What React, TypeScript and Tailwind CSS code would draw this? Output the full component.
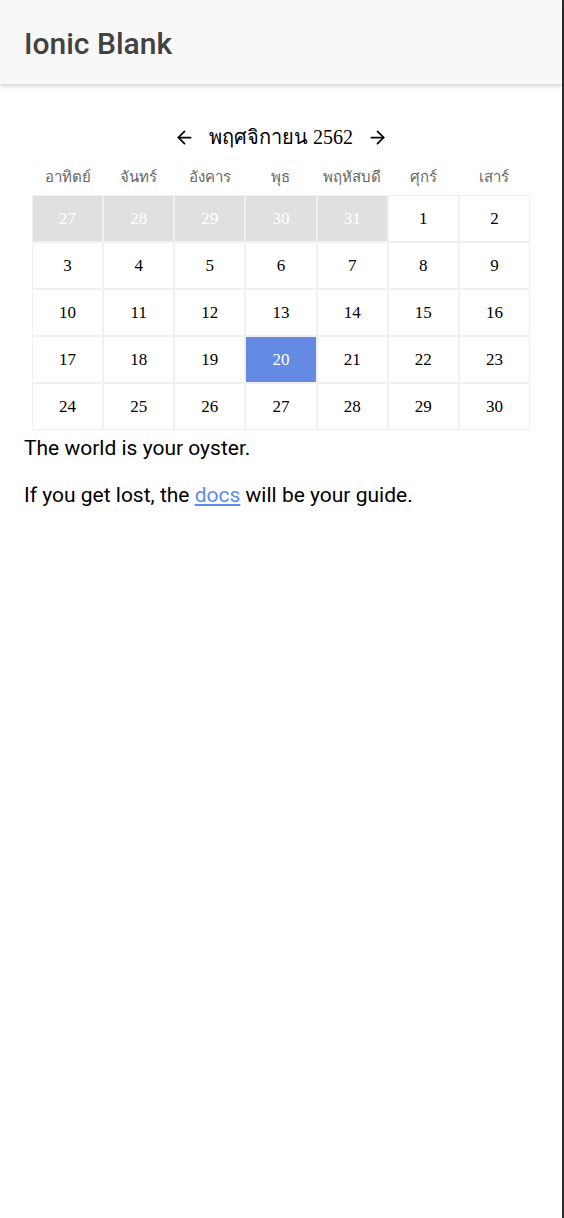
import React from "react";
import { ArrowLeft, ArrowRight } from "lucide-react";

const weekdays = ["อาทิตย์", "จันทร์", "อังคาร", "พุธ", "พฤหัสบดี", "ศุกร์", "เสาร์"];

type Day = { n: number; muted?: boolean; active?: boolean };

const days: Day[] = [
  ...[27, 28, 29, 30, 31].map((n) => ({ n, muted: true })),
  ...Array.from({ length: 30 }, (_, i) => ({ n: i + 1, active: i + 1 === 20 })),
];

export default function App() {
  return (
    <div className="flex min-h-[1218px] bg-white">
      <div className="flex-1 min-w-0">
        <header className="h-[84px] bg-[#f8f8f8] flex items-center px-6 shadow-[0_2px_4px_rgba(0,0,0,0.18)] relative">
          <h1 className="pt-0.5 text-[30px] font-medium text-[#424242] font-['Roboto',sans-serif]">Ionic Blank</h1>
        </header>

        <main className="px-6 pt-9">
          <div className="px-2 font-['Liberation_Serif','Noto_Serif','DejaVu_Serif',serif]">
            <div className="h-[34px] flex items-center justify-center gap-3 text-black">
              <button className="p-0.5">
                <ArrowLeft size={21} strokeWidth={2} />
              </button>
              <span className="text-[20px]">พฤศจิกายน 2562</span>
              <button className="p-0.5">
                <ArrowRight size={21} strokeWidth={2} />
              </button>
            </div>
            <div className="mt-1.5 h-[34px] grid grid-cols-7 items-center text-center text-[15px] text-[#666]">
              {weekdays.map((w) => (
                <div key={w}>{w}</div>
              ))}
            </div>
            <div className="mt-px grid grid-cols-7 gap-[2px] bg-[#f0f0f0] p-px">
              {days.map((d, i) => (
                <div
                  key={i}
                  className={
                    "h-[45px] flex items-center justify-center text-[17px] " +
                    (d.muted
                      ? "bg-[#e0e0e0] text-white"
                      : d.active
                      ? "bg-[#648ae4] text-white"
                      : "bg-white text-black")
                  }
                >
                  {d.n}
                </div>
              ))}
            </div>
          </div>

          <div className="mt-1 font-['Roboto',sans-serif] text-[21px] leading-[28px] text-black">
            <p className="mb-[19px]">The world is your oyster.</p>
            <p>
              If you get lost, the{" "}
              <a href="#" className="text-[#5b8def] underline">
                docs
              </a>{" "}
              will be your guide.
            </p>
          </div>
        </main>
      </div>
      <div className="w-[2px] bg-[#2b2b2b]" />
    </div>
  );
}
